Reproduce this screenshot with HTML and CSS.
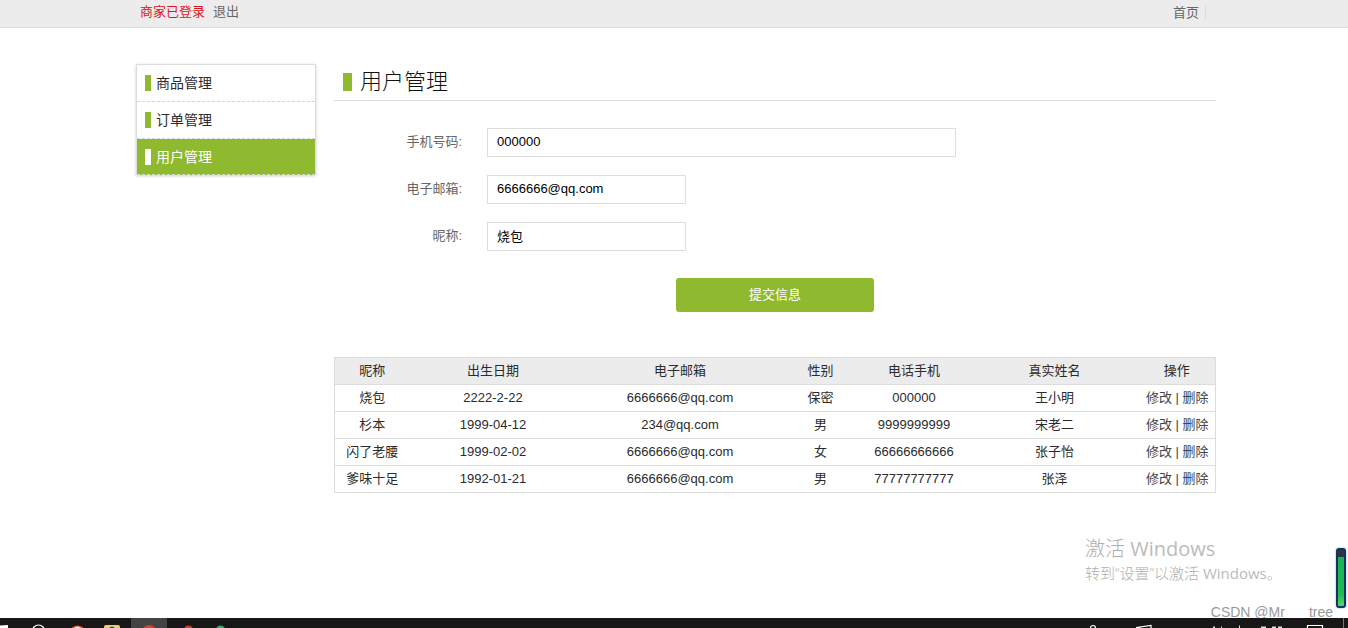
FILE: index.html
```html
<!DOCTYPE html>
<html lang="zh-CN">
<head>
    <meta charset="UTF-8">
    <meta name="viewport" content="width=device-width, initial-scale=1.0">
    <title>用户管理</title>
    <link rel="stylesheet" href="styles.css">
</head>
<body>
<div class="topbar">
    <div class="topbar-inner">
        <div class="topbar-left">
            <span class="logged">商家已登录</span>
            <a href="#">退出</a>
        </div>
        <div class="topbar-right"><a href="#">首页</a></div>
    </div>
</div>

<div class="container">
    <ul class="sidebar">
        <li><a href="#">商品管理</a></li>
        <li><a href="#">订单管理</a></li>
        <li class="active"><a href="#">用户管理</a></li>
    </ul>

    <div class="content">
        <h1>用户管理</h1>
        <form class="user-form">
            <div class="form-row">
                <label for="phone">手机号码:</label>
                <input type="text" id="phone" name="phone" class="wide" value="000000">
            </div>
            <div class="form-row">
                <label for="email">电子邮箱:</label>
                <input type="text" id="email" name="email" value="6666666@qq.com">
            </div>
            <div class="form-row">
                <label for="nickname">昵称:</label>
                <input type="text" id="nickname" name="nickname" value="烧包">
            </div>
            <div class="form-actions">
                <button type="button">提交信息</button>
            </div>
        </form>

        <table class="user-table">
            <colgroup>
                <col class="col-nick"><col class="col-birth"><col class="col-email"><col class="col-sex"><col class="col-phone"><col class="col-name"><col class="col-op">
            </colgroup>
            <thead>
                <tr><th>昵称</th><th>出生日期</th><th>电子邮箱</th><th>性别</th><th>电话手机</th><th>真实姓名</th><th>操作</th></tr>
            </thead>
            <tbody>
                <tr><td>烧包</td><td>2222-2-22</td><td>6666666@qq.com</td><td>保密</td><td>000000</td><td>王小明</td><td class="op"><a href="#">修改</a> | <a href="#">删除</a></td></tr>
                <tr><td>杉本</td><td>1999-04-12</td><td>234@qq.com</td><td>男</td><td>9999999999</td><td>宋老二</td><td class="op"><a href="#">修改</a> | <a href="#">删除</a></td></tr>
                <tr><td>闪了老腰</td><td>1999-02-02</td><td>6666666@qq.com</td><td>女</td><td>66666666666</td><td>张子怡</td><td class="op"><a href="#">修改</a> | <a href="#">删除</a></td></tr>
                <tr><td>爹味十足</td><td>1992-01-21</td><td>6666666@qq.com</td><td>男</td><td>77777777777</td><td>张泽</td><td class="op"><a href="#">修改</a> | <a href="#">删除</a></td></tr>
            </tbody>
        </table>
    </div>
</div>

<div class="activate">
    <p class="activate-title">激活 <span>Windows</span></p>
    <p>转到“设置”以激活 <span>Windows</span>。</p>
</div>
<div class="meter"></div>
<div class="credit"><span>CSDN @Mr</span><span>tree</span></div>

<div class="taskbar">
    <svg class="tasks" width="240" height="10" viewBox="0 0 240 10">
        <path d="M0 7.5L8 7V10H0z" fill="#fff"/>
        <circle cx="38.5" cy="13" r="6" fill="none" stroke="#fff" stroke-width="1.2"/>
        <ellipse cx="77.5" cy="13" rx="7" ry="5.5" fill="#e0533a"/>
        <path d="M74 10Q77 7 81 10z" fill="#f5ece0"/>
        <rect x="104" y="7" width="16" height="6" rx="2" fill="#f0cf62"/>
        <path d="M109 10Q112 7 115 10z" fill="#5a4a20"/>
        <rect x="131" width="36" height="10" fill="#434343"/>
        <circle cx="149" cy="14" r="7" fill="#e23c32"/>
        <circle cx="188.5" cy="12" r="4.5" fill="#d8382f"/>
        <circle cx="220.5" cy="12" r="4.5" fill="#2fae60"/>
    </svg>
    <svg class="tray" width="268" height="10" viewBox="0 0 268 10">
        <g fill="none" stroke="#fff" stroke-width="1.2">
            <circle cx="13" cy="10" r="2.5"/>
            <path d="M56 9.5L71 7.5V10M60 10V9"/>
            <path d="M227.500 10V7.5H242.500V10"/>
        </g>
        <path d="M133 8.500h2v1.500h-2zM141 8.500h1v1.500h-1zM159 7.500h1v2.500h-1zM181 8.500h5v1.500h-5zM192 8.500h4v1.500h-4zM198 8.500h4v1.500h-4z" fill="#ddd"/>
        <path d="M263.500 0V10" stroke="#777"/>
    </svg>
</div>
</body>
</html>
```

FILE: styles.css
```css
* { box-sizing: border-box; }
body {
    margin: 0; min-height: 100vh; display: flex; flex-direction: column; position: relative;
    font-family: "Liberation Sans", "Noto Sans CJK SC", sans-serif; font-size: 13px; line-height: 20px;
    color: #2b2b2b; background: #fff;
}
a { color: inherit; text-decoration: none; }
ul, p, h1 { margin: 0; padding: 0; list-style: none; font-weight: inherit; }

.topbar { height: 28px; padding-left: 4px; background: #ececec; border-bottom: 1px solid #ddd; color: #666; }
.topbar-inner { max-width: 1080px; margin: 0 auto; padding: 2px 10px 0 4px; display: flex; justify-content: space-between; }
.topbar-left { display: flex; gap: 8px; }
.logged { color: #e01222; }
.topbar-right { padding-top: 1px; }
.topbar-right a { padding-right: 6px; border-right: 1px solid #ddd; }

.container { width: 100%; padding-left: 4px; flex: 1; display: flex; justify-content: center; gap: 18px; margin-top: 36px; }
.sidebar { width: 180px; align-self: flex-start; border: 1px solid #ddd; border-bottom: 0; box-shadow: 0 1px 3px rgba(0, 0, 0, 0.2); font-size: 14px; }
.sidebar li { height: 37px; border-bottom: 1px dashed #d5d5d5; }
.sidebar a { display: flex; align-items: center; gap: 5px; height: 36px; padding-left: 8px; }
.sidebar a::before { content: ""; width: 6px; height: 16px; background: #8fb92e; }
.sidebar .active { height: 36px; background: #8fb92e; color: #fff; }
.sidebar .active a::before { background: #fff; }

.content { flex: 1; max-width: 882px; }
h1 { display: flex; align-items: center; gap: 8px; height: 37px; padding-left: 9px; border-bottom: 1px solid #ddd; font-size: 22px; line-height: 36px; font-weight: 300; color: #111; }
h1::before { content: ""; width: 9px; height: 18px; background: #8fb92e; }

.user-form { padding-top: 27px; display: flex; flex-direction: column; gap: 18px; }
.form-row { display: flex; gap: 25px; }
.form-row label { width: 128px; line-height: 27px; text-align: right; color: #666; }
.form-row input { width: 199px; height: 29px; padding: 0 9px 2px; border: 1px solid #ddd; font: inherit; color: #000; }
.form-row .wide { width: 469px; }
.form-actions { padding-top: 9px; text-align: center; }
button { width: 198px; height: 34px; border: 0; border-radius: 3px; background: #8fb92e; color: #fff; font: inherit; }

.user-table { width: 100%; margin-top: 45px; table-layout: fixed; border-collapse: collapse; border: 1px solid #ddd; text-align: center; }
.user-table th, .user-table td { height: 27px; padding: 0; border-bottom: 1px solid #ddd; font-weight: inherit; }
.user-table thead { background: #ececec; }
.user-table .op { padding-left: 1px; white-space: nowrap; color: #444; }
.col-nick { width: 75px; }
.col-birth { width: 167px; }
.col-email { width: 207px; }
.col-sex { width: 74px; }
.col-phone { width: 113px; }
.col-name { width: 168px; }
.col-op { width: 77px; }

/* desktop overlays */
.activate { position: absolute; right: 63px; bottom: 45px; width: 200px; color: #b0b0b0; font-family: "Open Sans", "Noto Sans CJK SC", sans-serif; font-size: 15px; font-weight: 300; white-space: nowrap; }
.activate-title { font-size: 20px; line-height: 28px; }
.activate span { font-weight: 400; color: #bbb; }
.meter { position: absolute; right: 2px; bottom: 20px; width: 10px; height: 60px; border: 2px solid #15345c; border-radius: 3px; background: linear-gradient(#2c3540 7px, #18b455 7px, #22b955 80%, #55da70); box-shadow: 0 0 2px #58a8f0; }
.credit { position: absolute; right: 15px; bottom: 6px; display: flex; gap: 24px; font-family: "Liberation Sans", sans-serif; font-size: 14px; color: #999; }
.taskbar { position: relative; display: flex; justify-content: space-between; height: 10px; background: #171717; overflow: hidden; }
```
